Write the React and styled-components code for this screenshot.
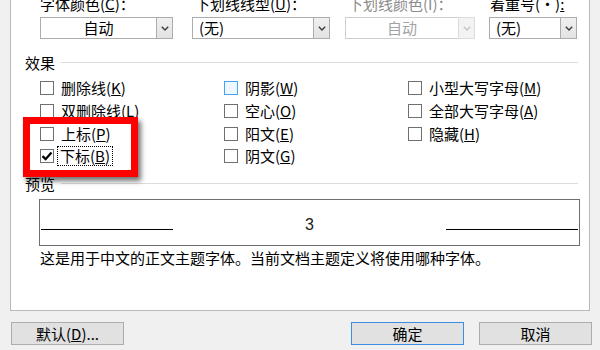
import React from 'react';
import styled, { createGlobalStyle } from 'styled-components';

const Global = createGlobalStyle`
  html, body { margin: 0; padding: 0; }
  body {
    width: 600px; height: 350px; overflow: hidden;
    background: #f0f0f0;
    font-family: "Noto Sans CJK SC", "Noto Sans", sans-serif;
    font-size: 15px; color: #000;
  }
`;

const Page = styled.div`
  width: 600px; height: 350px;
  display: flex; flex-direction: column;
`;

const Panel = styled.div`
  position: relative;
  box-sizing: border-box;
  margin-left: 10px;
  width: 580px; height: 311px;
  background: #fff;
  border: 1px solid #b9b9b9; border-top: none;
  padding: 0 11px 0 14px;
  display: flex; flex-direction: column;
`;

const FieldsRow = styled.div`
  margin: -5px 0 0 15px;
  display: grid;
  grid-template-columns: 152px 153px 144px 88px;
`;

const Field = styled.div`
  display: flex; flex-direction: column; gap: 5px;
`;

const FieldLabel = styled.div`
  height: 17px; line-height: 17px; white-space: nowrap;
  padding-left: ${p => p.$indent || 0}px;
  color: ${p => (p.$disabled ? '#8c8c8c' : '#000')};
`;

const ComboBox = styled.div`
  box-sizing: border-box;
  width: ${p => p.$w}px; height: 22px;
  border: 1px solid ${p => (p.$disabled ? '#cfcfcf' : '#acacac')};
  background: #fff;
  display: flex;
`;

const ComboText = styled.div`
  flex: 1;
  display: flex; align-items: center;
  justify-content: ${p => (p.$center ? 'center' : 'flex-start')};
  padding-left: ${p => (p.$center ? 0 : 6)}px;
  color: ${p => (p.$disabled ? '#a3a3a3' : '#000')};
  line-height: 20px;
`;

const ComboButton = styled.div`
  box-sizing: border-box;
  width: 17px;
  border: 1px solid ${p => (p.$disabled ? '#dcdcdc' : '#acacac')};
  margin: -1px -1px -1px 0;
  background: ${p => (p.$disabled ? '#f3f3f3' : 'linear-gradient(#f0f0f0, #e3e3e3)')};
  display: flex; align-items: center; justify-content: center;
`;

const SectionHeader = styled.div`
  display: flex; align-items: center; gap: 6px;
  height: 17px; line-height: 17px;
  margin-top: ${p => p.$mt}px;
`;

const SectionLine = styled.div`
  flex: 1; height: 1px; background: #dcdcdc;
`;

const CheckGrid = styled.div`
  margin: 6px 0 0 15px;
  display: grid;
  grid-template-columns: 184px 184px 1fr;
  grid-template-rows: repeat(4, 22.67px);
  grid-auto-flow: column;
`;

const CheckRow = styled.div`
  display: flex; align-items: center; gap: 7px;
  white-space: nowrap;
`;

const Box = styled.div`
  box-sizing: border-box;
  width: 14px; height: 14px; flex: none;
  border: 1px solid ${p => (p.$hover ? '#4aa0f2' : '#707070')};
  background: ${p => (p.$hover ? '#eef6fe' : '#fff')};
  display: flex; align-items: center; justify-content: center;
`;

const CheckLabel = styled.span`
  line-height: 16px;
  ${p => p.$focus && `
    outline: 1px dotted #000;
    outline-offset: 0;
    padding: 1px 2px;
    margin-left: -3px;
  `}
`;

const Empty = styled.div``;

const PreviewBox = styled.div`
  box-sizing: border-box;
  margin: 7px -2px 0 14px;
  height: 47px;
  border: 1px solid #6f6f6f;
  padding: 0 1px 15px 1px;
  display: grid;
  grid-template-columns: 132px 1fr 132px;
  align-items: end;
`;

const PreviewLine = styled.div`
  height: 1px; background: #000;
`;

const PreviewSample = styled.div`
  text-align: center;
  font-family: "Liberation Sans", Arial, sans-serif;
  font-size: 16px; line-height: 16px;
  margin-bottom: -3px;
  color: #1a1a1a;
`;

const Description = styled.div`
  margin: 3px 0 0 15px;
  line-height: 17px; white-space: nowrap;
`;

const Highlight = styled.div`
  position: absolute;
  left: 12px; top: 117px;
  width: 115px; height: 60px;
  box-sizing: border-box;
  border: 7px solid #ff0000;
  box-shadow: 3px 4px 5px rgba(0, 0, 0, 0.55);
  pointer-events: none;
`;

const ButtonRow = styled.div`
  margin-top: 11px;
  padding: 0 8px 0 11px;
  display: flex; gap: 15px;
`;

const Button = styled.button`
  box-sizing: border-box;
  width: 113px; height: 23px;
  margin-left: ${p => (p.$push ? 'auto' : '0')};
  background: #e1e1e1;
  border: 1px solid ${p => (p.$primary ? '#3a8ee6' : '#adadad')};
  font-family: "Noto Sans CJK SC", "Noto Sans", sans-serif;
  font-size: 15px; color: #000;
  padding: 0; line-height: 21px;
`;

const Chevron = ({ disabled }) => (
  <svg width="8" height="5" viewBox="0 0 8 5">
    <polyline points="0.8,0.8 4,4 7.2,0.8" fill="none" stroke={disabled ? '#c4c4c4' : '#3c3c3c'} strokeWidth="1.4" />
  </svg>
);

const Check = () => (
  <svg width="12" height="12" viewBox="0 0 12 12">
    <path d="M1.5 6.2 L4.6 9.2 L10.5 2.6" fill="none" stroke="#000" strokeWidth="2.3" />
  </svg>
);

const Combo = ({ w, text, center, disabled }) => (
  <ComboBox $w={w} $disabled={disabled}>
    <ComboText $center={center} $disabled={disabled}>{text}</ComboText>
    <ComboButton $disabled={disabled}><Chevron disabled={disabled} /></ComboButton>
  </ComboBox>
);

const Option = ({ name, k, checked, hover, focus }) => (
  <CheckRow>
    <Box $hover={hover}>{checked && <Check />}</Box>
    <CheckLabel $focus={focus}>{name}(<u>{k}</u>)</CheckLabel>
  </CheckRow>
);

export default function App() {
  return (
    <>
      <Global />
      <Page>
        <Panel>
          <FieldsRow>
            <Field>
              <FieldLabel>字体颜色(<u>C</u>)：</FieldLabel>
              <Combo w={133} text="自动" center />
            </Field>
            <Field>
              <FieldLabel $indent={3}>下划线线型(<u>U</u>)：</FieldLabel>
              <Combo w={138} text="(无)" />
            </Field>
            <Field>
              <FieldLabel $indent={3} $disabled>下划线颜色(I)：</FieldLabel>
              <Combo w={130} text="自动" center disabled />
            </Field>
            <Field>
              <FieldLabel $indent={1}>着重号(・)<u>:</u></FieldLabel>
              <Combo w={88} text="(无)" />
            </Field>
          </FieldsRow>

          <SectionHeader $mt={15}>效果<SectionLine /></SectionHeader>
          <CheckGrid>
            <Option name="删除线" k="K" />
            <Option name="双删除线" k="L" />
            <Option name="上标" k="P" />
            <Option name="下标" k="B" checked focus />
            <Option name="阴影" k="W" hover />
            <Option name="空心" k="O" />
            <Option name="阳文" k="E" />
            <Option name="阴文" k="G" />
            <Option name="小型大写字母" k="M" />
            <Option name="全部大写字母" k="A" />
            <Option name="隐藏" k="H" />
            <Empty />
          </CheckGrid>

          <SectionHeader $mt={7}>预览<SectionLine /></SectionHeader>
          <PreviewBox>
            <PreviewLine />
            <PreviewSample>3</PreviewSample>
            <PreviewLine />
          </PreviewBox>
          <Description>这是用于中文的正文主题字体。当前文档主题定义将使用哪种字体。</Description>

          <Highlight />
        </Panel>
        <ButtonRow>
          <Button>默认(<u>D</u>)...</Button>
          <Button $primary $push>确定</Button>
          <Button>取消</Button>
        </ButtonRow>
      </Page>
    </>
  );
}
